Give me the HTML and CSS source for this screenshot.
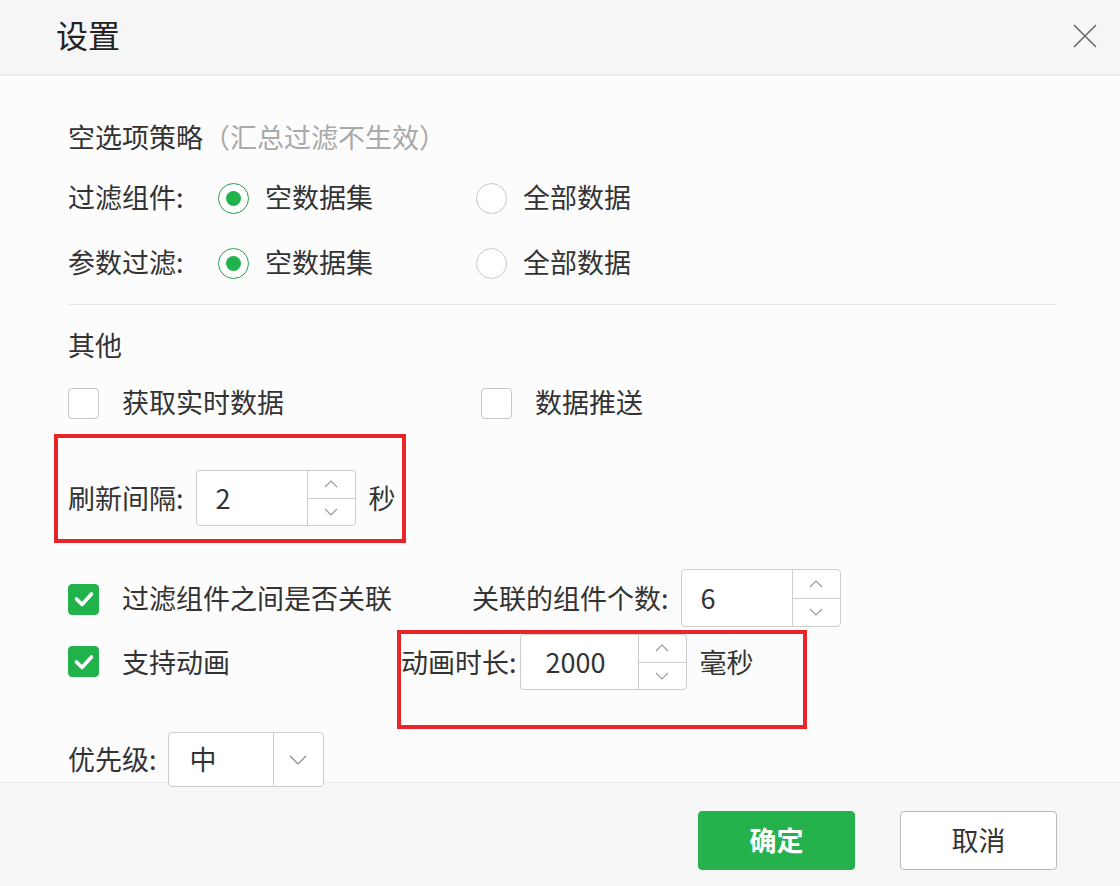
FILE: index.html
```html
<!DOCTYPE html>
<html lang="zh-CN">
<head>
<meta charset="utf-8">
<title>设置</title>
<link rel="stylesheet" href="styles.css">
</head>
<body>
<div class="dialog">
  <div class="header">
    <div class="title">设置</div>
    <svg class="close" width="26" height="26" viewBox="0 0 26 26"><path d="M2 2 L24 24 M24 2 L2 24" stroke="#6a6a6a" stroke-width="1.6" fill="none"/></svg>
  </div>
  <div class="body">
    <div class="row sec-title r-title">空选项策略<span class="hint">（汇总过滤不生效）</span></div>
    <div class="row r-radio1">
      <span class="label w150">过滤组件:</span>
      <span class="opt w258"><span class="radio on"></span><span class="opt-text">空数据集</span></span>
      <span class="opt"><span class="radio"></span><span class="opt-text">全部数据</span></span>
    </div>
    <div class="row r-radio2">
      <span class="label w150">参数过滤:</span>
      <span class="opt w258"><span class="radio on"></span><span class="opt-text">空数据集</span></span>
      <span class="opt"><span class="radio"></span><span class="opt-text">全部数据</span></span>
    </div>
    <div class="divider"></div>
    <div class="row sec-title r-other">其他</div>
    <div class="row r-checks">
      <span class="opt w413"><span class="check"></span><span class="check-text">获取实时数据</span></span>
      <span class="opt"><span class="check"></span><span class="check-text">数据推送</span></span>
    </div>
    <div class="row r-refresh">
      <span class="label">刷新间隔:</span>
      <div class="spinner s1">
        <div class="spin-val">2</div>
        <div class="spin-btns">
          <div class="spin-btn"><svg width="14" height="8" viewBox="0 0 14 8"><path d="M1 7 L7 1 L13 7" stroke="#9a9a9a" stroke-width="1.1" fill="none"/></svg></div>
          <div class="spin-btn"><svg width="14" height="8" viewBox="0 0 14 8"><path d="M1 1 L7 7 L13 1" stroke="#9a9a9a" stroke-width="1.1" fill="none"/></svg></div>
        </div>
      </div>
      <span class="unit">秒</span>
    </div>
    <div class="row r-assoc">
      <span class="opt w404"><span class="check on"><svg width="22" height="18" viewBox="0 0 22 18"><path d="M3.5 9 L9 14.5 L18.5 4" stroke="#fff" stroke-width="3.6" fill="none" stroke-linecap="round" stroke-linejoin="round"/></svg></span><span class="check-text">过滤组件之间是否关联</span></span>
      <span class="label">关联的组件个数:</span>
      <div class="spinner s2">
        <div class="spin-val">6</div>
        <div class="spin-btns">
          <div class="spin-btn"><svg width="14" height="8" viewBox="0 0 14 8"><path d="M1 7 L7 1 L13 7" stroke="#9a9a9a" stroke-width="1.1" fill="none"/></svg></div>
          <div class="spin-btn"><svg width="14" height="8" viewBox="0 0 14 8"><path d="M1 1 L7 7 L13 1" stroke="#9a9a9a" stroke-width="1.1" fill="none"/></svg></div>
        </div>
      </div>
    </div>
    <div class="row r-anim">
      <span class="opt w333"><span class="check on"><svg width="22" height="18" viewBox="0 0 22 18"><path d="M3.5 9 L9 14.5 L18.5 4" stroke="#fff" stroke-width="3.6" fill="none" stroke-linecap="round" stroke-linejoin="round"/></svg></span><span class="check-text">支持动画</span></span>
      <span class="label">动画时长:</span>
      <div class="spinner s3">
        <div class="spin-val">2000</div>
        <div class="spin-btns">
          <div class="spin-btn"><svg width="14" height="8" viewBox="0 0 14 8"><path d="M1 7 L7 1 L13 7" stroke="#9a9a9a" stroke-width="1.1" fill="none"/></svg></div>
          <div class="spin-btn"><svg width="14" height="8" viewBox="0 0 14 8"><path d="M1 1 L7 7 L13 1" stroke="#9a9a9a" stroke-width="1.1" fill="none"/></svg></div>
        </div>
      </div>
      <span class="unit">毫秒</span>
    </div>
    <div class="row r-prio">
      <span class="label">优先级:</span>
      <div class="select">
        <div class="select-val">中</div>
        <div class="select-arrow"><svg width="18" height="10" viewBox="0 0 18 10"><path d="M1 1 L9 9 L17 1" stroke="#8a8a8a" stroke-width="1.2" fill="none"/></svg></div>
      </div>
    </div>
    <div class="mark mark1"></div>
    <div class="mark mark2"></div>
  </div>
  <div class="footer">
    <button class="btn primary">确定</button>
    <button class="btn">取消</button>
  </div>
</div>
</body>
</html>
```
FILE: styles.css
```css
* { box-sizing: border-box; }
html, body { margin: 0; padding: 0; }
body {
  width: 1120px;
  height: 886px;
  overflow: hidden;
  background: #fdfcfd;
  font-family: "Noto Sans CJK SC", "Noto Sans", sans-serif;
  color: #333;
}
.dialog { width: 1120px; height: 886px; display: flex; flex-direction: column; }
.header {
  height: 76px;
  flex: none;
  background: #f6f6f7;
  border-bottom: 2px solid #ebebed;
  display: flex;
  align-items: center;
  justify-content: space-between;
  padding: 0 22px 0 56px;
}
.title { font-size: 32px; color: #222; line-height: 1; margin-top: -6px; }
.close { margin-top: -3px; }
.body {
  position: relative;
  height: 706px;
  flex: none;
  padding: 0 63px 0 68px;
  display: flex;
  flex-direction: column;
  font-size: 27px;
}
.row { display: flex; align-items: center; flex: none; white-space: nowrap; line-height: 1.2; }
.sec-title { height: 36px; }
.hint { color: #a9a9a9; }
.r-title { margin-top: 43px; }
.r-radio1 { height: 40px; margin-top: 22px; }
.r-radio2 { height: 40px; margin-top: 25px; }
.divider { height: 1px; background: #e6e6e8; margin-top: 22px; flex: none; }
.r-other { margin-top: 22px; }
.r-checks { height: 40px; margin-top: 19px; }
.r-refresh { height: 56px; margin-top: 48px; }
.r-assoc { height: 58px; margin-top: 43px; }
.r-anim { height: 56px; margin-top: 7px; }
.r-prio { height: 55px; margin-top: 42px; }
.r-radio1 .radio, .r-radio2 .radio, .r-checks .check { margin-top: 3px; }
.r-assoc .check { margin-top: 2px; }

.label { flex: none; }
.w150 { width: 150px; }
.opt { display: flex; align-items: center; flex: none; }
.w258 { width: 258px; }
.w413 { width: 413px; }
.w404 { width: 404px; }
.w333 { width: 333px; }

.radio {
  width: 31px; height: 31px;
  border-radius: 50%;
  border: 1.5px solid #c9c9c9;
  background: #fff;
  flex: none;
  display: flex; align-items: center; justify-content: center;
}
.radio.on { border-color: #2a9d4f; }
.radio.on::after {
  content: "";
  width: 15px; height: 15px;
  border-radius: 50%;
  background: #22b24c;
}
.opt-text { margin-left: 16px; }

.check {
  width: 31px; height: 31px;
  border: 1.5px solid #c4c4c4;
  border-radius: 4px;
  background: #fff;
  flex: none;
  display: flex; align-items: center; justify-content: center;
}
.check.on { background: #22b24c; border-color: #22b24c; }
.check-text { margin-left: 23px; }

.spinner {
  display: flex;
  height: 56px;
  border: 1px solid #cdcdcd;
  border-radius: 4px;
  background: #fff;
  flex: none;
}
.s1 { width: 160px; margin-left: 12px; }
.s2 { width: 160px; height: 58px; margin-left: 12px; }
.s3 { width: 167px; margin-left: 3px; }
.spin-val { flex: 1; display: flex; align-items: center; padding-left: 19px; font-size: 27px; color: #333; }
.s3 .spin-val { padding-left: 25px; }
.spin-btns { width: 48px; border-left: 1px solid #cdcdcd; display: flex; flex-direction: column; }
.spin-btn { flex: 1; display: flex; align-items: center; justify-content: center; }
.spin-btn + .spin-btn { border-top: 1px solid #cdcdcd; }
.unit { margin-left: 13px; }

.select {
  display: flex;
  width: 156px; height: 55px;
  margin-left: 11px;
  border: 1px solid #cdcdcd;
  border-radius: 4px;
  background: #fff;
  position: relative;
  z-index: 1;
}
.select-val { width: 104px; display: flex; align-items: center; padding-left: 21px; font-size: 27px; }
.select-arrow { flex: 1; border-left: 1px solid #cdcdcd; display: flex; align-items: center; justify-content: center; }

.mark { position: absolute; border: 4px solid #e8262a; pointer-events: none; }
.mark1 { left: 54px; top: 358px; width: 352px; height: 109px; }
.mark2 { left: 397px; top: 554px; width: 410px; height: 99px; }

.footer {
  flex: 1;
  background: #f7f7f8;
  border-top: 1px solid #e9e9eb;
  display: flex;
  align-items: center;
  justify-content: flex-end;
  gap: 45px;
  padding: 0 63px 0 0;
}
.btn {
  width: 157px; height: 59px;
  border: 1px solid #b9b9b9;
  border-radius: 4px;
  background: #fff;
  font-family: "Noto Sans CJK SC", "Noto Sans", sans-serif;
  font-size: 27px;
  color: #333;
  padding: 0 0 3px 0;
  margin-top: 12px;
}
.btn.primary { background: #25b24d; border-color: #25b24d; color: #fff; font-weight: bold; }
```
